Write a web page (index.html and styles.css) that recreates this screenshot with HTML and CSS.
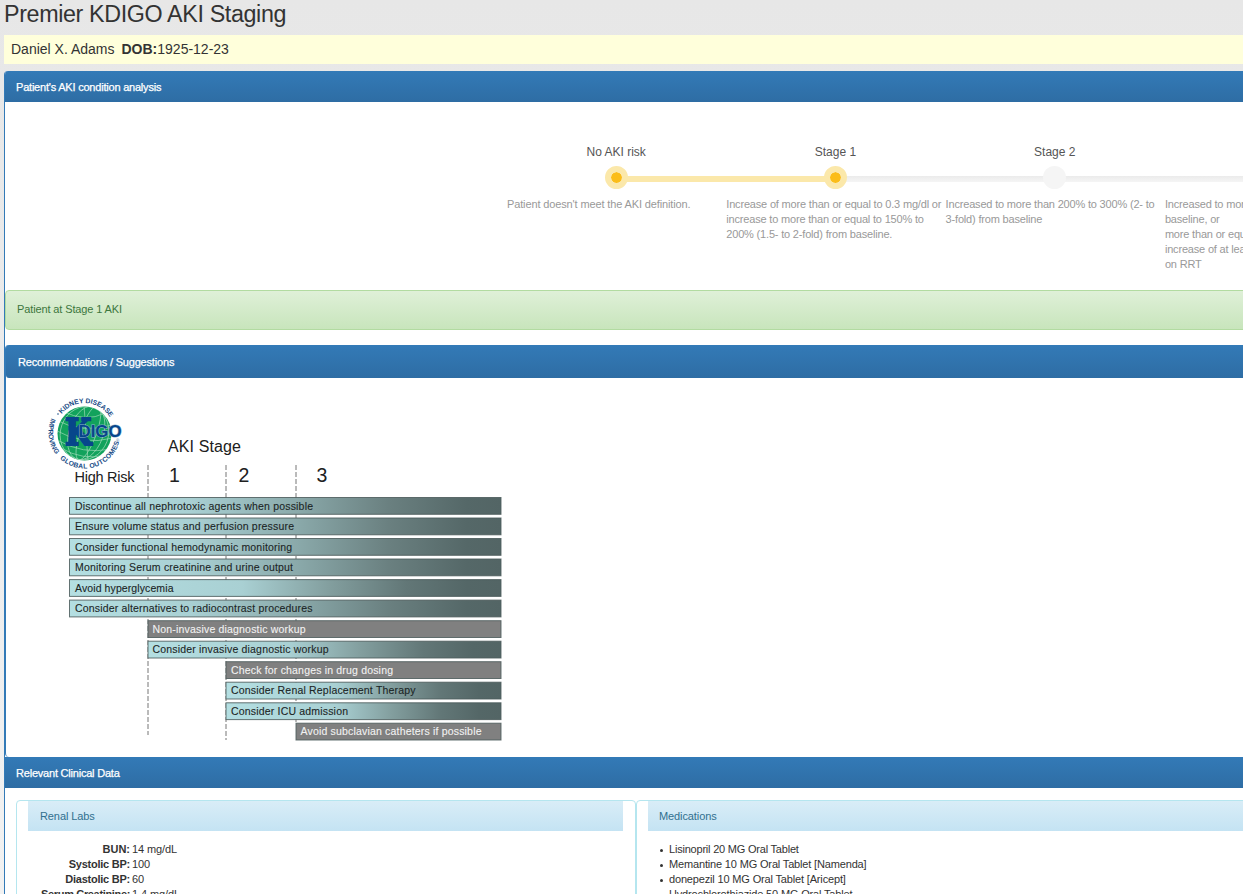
FILE: index.html
```html
<!DOCTYPE html>
<html lang="en">
<head>
<meta charset="utf-8">
<title>Premier KDIGO AKI Staging</title>
<link rel="stylesheet" href="styles.css">
</head>
<body>
<main class="page">
  <h1 class="title">Premier KDIGO AKI Staging</h1>
  <div class="patient"><span>Daniel X. Adams</span><span><b>DOB:</b>1925-12-23</span></div>

  <section class="panel">
    <h2 class="bar">Patient's AKI condition analysis</h2>
    <div class="stages">
      <div class="stage done first">
        <div class="name">No AKI risk</div><div class="track"><i class="dot"></i></div>
        <p>Patient doesn't meet the AKI definition.</p>
      </div>
      <div class="stage done">
        <div class="name">Stage 1</div><div class="track"><i class="dot"></i></div>
        <p>Increase of more than or equal to 0.3 mg/dl or<br>increase to more than or equal to 150% to<br>200% (1.5- to 2-fold) from baseline.</p>
      </div>
      <div class="stage">
        <div class="name">Stage 2</div><div class="track"><i class="dot"></i></div>
        <p>Increased to more than 200% to 300% (2- to<br>3-fold) from baseline</p>
      </div>
      <div class="stage">
        <div class="name">Stage 3</div><div class="track"><i class="dot"></i></div>
        <p>Increased to more than 300% from<br>baseline, or<br>more than or equal to 4.0 mg/dl with an<br>increase of at least 0.5 mg/dl or<br>on RRT</p>
      </div>
    </div>
    <div class="alert">Patient at Stage 1 AKI</div>

    <div class="inner">
      <h2 class="bar">Recommendations / Suggestions</h2>
      <svg class="chart" width="470" height="360" viewBox="40 390 470 360">
        <defs>
          <linearGradient id="teal" x1="0" x2="1"><stop offset="0" stop-color="#b4dfe2"/><stop offset=".28" stop-color="#a9d0d3"/><stop offset=".53" stop-color="#8aa9aa"/><stop offset=".74" stop-color="#6a8080"/><stop offset=".92" stop-color="#556868"/><stop offset="1" stop-color="#536565"/></linearGradient>
          <linearGradient id="teal2" x1="0" x2="1"><stop offset="0" stop-color="#b4dfe2"/><stop offset=".4" stop-color="#a9d0d3"/><stop offset=".6" stop-color="#839f9f"/><stop offset=".78" stop-color="#627777"/><stop offset=".92" stop-color="#546767"/><stop offset="1" stop-color="#536565"/></linearGradient>
          <path id="arcTop" d="M 55 432.500 A 29.500 29.500 0 0 1 114 432.500"/>
          <path id="arcLow" d="M 53.300 414.500 A 36 36 0 1 0 120.400 430"/>
          <clipPath id="globe"><circle cx="84.500" cy="433.500" r="27"/></clipPath>
        </defs>
        <g>
          <circle cx="84.500" cy="433.500" r="27" fill="#12a25c"/>
          <g clip-path="url(#globe)" fill="none" stroke="#9bd9b4" stroke-width=".7">
            <ellipse cx="88" cy="431" rx="8" ry="29" transform="rotate(20 84 433)"/>
            <ellipse cx="86" cy="432" rx="17" ry="28" transform="rotate(20 84 433)"/>
            <ellipse cx="84.500" cy="433" rx="24" ry="27" transform="rotate(20 84 433)"/>
            <path d="M62 411q24 12 43 2M56 420q26 14 56 5M55 430q28 16 58 8M57 440q26 15 54 9M61 448q22 13 44 7M84 405l4 56"/>
          </g>
          <g class="ring">
            <text class="ring-top"><textPath href="#arcTop" startOffset="20">KIDNEY DISEASE</textPath></text>
            <text class="ring-left"><textPath href="#arcLow" startOffset="4">IMPROVING</textPath></text>
            <text class="ring-low"><textPath href="#arcLow" startOffset="48">GLOBAL OUTCOMES</textPath></text>
            <circle cx="58" cy="414" r=".8"/>
          </g>
          <text class="logo-k" x="65" y="444.500" textLength="26.500" lengthAdjust="spacingAndGlyphs">K</text>
          <text class="logo-d" x="78.500" y="436.500" textLength="43" lengthAdjust="spacingAndGlyphs">DIGO</text>
          <text x="116" y="442.500" font-size="4.500" fill="#567ba5">®</text>
        </g>
        <g class="heads">
          <text x="168" y="452" font-size="16" textLength="73">AKI Stage</text>
          <text x="74.500" y="481.500" font-size="14.500" textLength="60">High Risk</text>
          <text x="169" y="481.500" font-size="19.500">1</text>
          <text x="238.500" y="481.500" font-size="19.500">2</text>
          <text x="316.500" y="481.500" font-size="19.500">3</text>
        </g>
        <path d="M148 465V735M226 465V740M296 465V724" stroke="#777" stroke-dasharray="5 2" fill="none"/>
        <g stroke="#4c5c5c" stroke-opacity=".85">
          <rect x="69.500" y="497.500" width="431.500" height="16.800" fill="url(#teal)"/>
          <rect x="69.500" y="518" width="431.500" height="16.800" fill="url(#teal)"/>
          <rect x="69.500" y="538.500" width="431.500" height="16.800" fill="url(#teal)"/>
          <rect x="69.500" y="559" width="431.500" height="16.800" fill="url(#teal)"/>
          <rect x="69.500" y="579.600" width="431.500" height="16.800" fill="url(#teal2)"/>
          <rect x="69.500" y="600.100" width="431.500" height="16.800" fill="url(#teal)"/>
          <rect x="148" y="620.700" width="353" height="16.800" fill="#808080"/>
          <rect x="148" y="641.200" width="353" height="16.800" fill="url(#teal2)"/>
          <rect x="226" y="661.700" width="275" height="16.800" fill="#808080"/>
          <rect x="226" y="682.200" width="275" height="16.800" fill="url(#teal2)"/>
          <rect x="226" y="702.800" width="275" height="16.800" fill="url(#teal2)"/>
          <rect x="296" y="723.200" width="205" height="16.800" fill="#808080"/>
        </g>
        <g class="labels">
          <text x="75" y="509.500" textLength="238">Discontinue all nephrotoxic agents when possible</text>
          <text x="75" y="530" textLength="219">Ensure volume status and perfusion pressure</text>
          <text x="75" y="550.500" textLength="217">Consider functional hemodynamic monitoring</text>
          <text x="75" y="571" textLength="218">Monitoring Serum creatinine and urine output</text>
          <text x="75" y="591.600" textLength="98.500">Avoid hyperglycemia</text>
          <text x="75" y="612.100" textLength="237.500">Consider alternatives to radiocontrast procedures</text>
          <text class="light" x="152.500" y="632.800" textLength="153">Non-invasive diagnostic workup</text>
          <text x="152.500" y="653.300" textLength="176">Consider invasive diagnostic workup</text>
          <text class="light" x="231" y="673.800" textLength="162">Check for changes in drug dosing</text>
          <text x="231" y="694.200" textLength="184.500">Consider Renal Replacement Therapy</text>
          <text x="231" y="714.800" textLength="117">Consider ICU admission</text>
          <text class="light" x="300.500" y="735.200" textLength="181">Avoid subclavian catheters if possible</text>
        </g>
      </svg>
    </div>

    <h2 class="bar">Relevant Clinical Data</h2>
    <div class="cards">
      <section class="card">
        <h3>Renal Labs</h3>
        <dl>
          <dt>BUN:</dt><dd>14 mg/dL</dd>
          <dt>Systolic BP:</dt><dd>100</dd>
          <dt>Diastolic BP:</dt><dd>60</dd>
          <dt>Serum Creatinine:</dt><dd>1.4 mg/dL</dd>
        </dl>
      </section>
      <section class="card meds">
        <h3>Medications</h3>
        <ul>
          <li>Lisinopril 20 MG Oral Tablet</li>
          <li>Memantine 10 MG Oral Tablet [Namenda]</li>
          <li>donepezil 10 MG Oral Tablet [Aricept]</li>
          <li>Hydrochlorothiazide 50 MG Oral Tablet</li>
        </ul>
      </section>
    </div>
  </section>
</main>
</body>
</html>
```
FILE: styles.css
```css
* { box-sizing: border-box; }
html, body { height: 894px; overflow: hidden; }
body { margin: 0; background: linear-gradient(#e7e7e7, #f2f2f2); color: #333; font: 11px/15px "Liberation Sans", Arial, sans-serif; }
.page { width: 1400px; height: 894px; padding-left: 4px; overflow: hidden; }
h1, h2, h3, p, ul, dl, dd { margin: 0; padding: 0; }
.title { height: 35px; font-size: 23.3px; line-height: 28px; font-weight: 400; letter-spacing: -.37px; }
.patient { display: flex; gap: 7px; height: 29px; padding-left: 7px; background: #ffffdb; font-size: 14px; line-height: 28px; }
.panel { margin-top: 7px; height: 900px; border-left: 1px solid #337ab7; border-radius: 4px 0 0 0; background: #fff; overflow: hidden; }
.bar { height: 31px; padding-left: 11px; background: linear-gradient(#337ab7, #2e6da4); color: #fff; font-size: 11px; line-height: 32px; font-weight: 400; letter-spacing: -.21px; -webkit-text-stroke: .25px #fff; }
.stages { display: flex; height: 188px; padding: 42px 0 0 501.5px; }
.stage { flex: 0 0 219.3px; min-width: 0; white-space: nowrap; }
.name { height: 22px; text-align: center; font-size: 12px; line-height: 16px; color: #555; }
.track { display: flex; justify-content: center; align-items: center; height: 23px; margin-right: -1px; background: linear-gradient(#ebebeb, #f5f5f5) 0 10px / 100% 6px no-repeat; }
.first .track { background: linear-gradient(#fbe8aa, #fbe8aa) 100% 10px / 50% 6px no-repeat; }
.done:not(.first) .track { background: linear-gradient(#fbe8aa, #fbe8aa) 0 10px / 50% 6px no-repeat, linear-gradient(#ebebeb, #f5f5f5) 100% 10px / 50% 6px no-repeat; }
.dot { width: 23px; height: 23px; margin-right: 1px; border-radius: 50%; background: #f5f5f5; }
.done .dot { border: 6px solid #fbe8aa; background: #fbbd19; background-clip: padding-box; }
.stage p { margin-top: 8px; color: #999; letter-spacing: -.18px; padding-left: .5px; }
.first p { letter-spacing: -.13px; }
.alert { height: 40px; padding-left: 11px; border: 1px solid #b2dba1; border-radius: 4px; background: linear-gradient(#dff0d8, #c8e5bc); color: #3c763d; line-height: 37px; letter-spacing: -.12px; }
.inner { height: 412px; margin-top: 15px; border-left: 1px solid #337ab7; border-radius: 4px 0 0 4px; }
.inner .bar { height: 33px; padding-left: 12px; line-height: 34px; border-radius: 3px 0 0 3px; letter-spacing: -.18px; }
.chart { display: block; margin: 12px 0 0 34px; font-family: "Liberation Sans", Arial, sans-serif; }
.heads { fill: #202020; }
.labels { font-size: 10.5px; fill: #1b2525; stroke: #1b2525; stroke-width: .1px; }
.labels .light { fill: #f2f2f2; stroke: #f2f2f2; }
.ring { font-size: 6.8px; font-weight: 700; fill: #174b86; }
.ring-top { letter-spacing: -.05px; }
.ring-left { letter-spacing: -.1px; }
.ring-low { letter-spacing: .3px; }
.logo-k { font: 700 37px "DejaVu Serif", serif; fill: #07468b; stroke: #07468b; stroke-width: 2px; }
.logo-d { font-size: 16px; font-weight: 700; fill: #07468b; stroke: #8fb5cf; stroke-width: 1px; paint-order: stroke; }
.cards { display: flex; padding: 12px 0 0 11px; }
.card { height: 140px; width: 620px; padding: 0 12px 0 11px; border: 1px solid #b5e6ef; border-radius: 4px; }
h3 { height: 30px; padding-left: 12px; background: linear-gradient(#d9edf7, #c4e3f3); color: #31708f; font-size: 11px; line-height: 31px; font-weight: 400; letter-spacing: -.1px; }
.meds h3 { padding-left: 11px; }
dl { display: grid; grid-template-columns: 102px 1fr; column-gap: 2px; padding-top: 11px; }
dt { text-align: right; font-weight: 700; letter-spacing: -.24px; }
dt:first-child { letter-spacing: 0; }
dt:last-of-type { letter-spacing: -.34px; }
dd { letter-spacing: -.1px; }
ul { padding: 11px 0 0 21px; letter-spacing: -.16px; list-style: none; }
li { position: relative; }
li::before { content: ""; position: absolute; left: -9px; top: 7px; width: 3px; height: 3px; border-radius: 50%; background: #333; }
li:first-child { letter-spacing: -.21px; }
```
